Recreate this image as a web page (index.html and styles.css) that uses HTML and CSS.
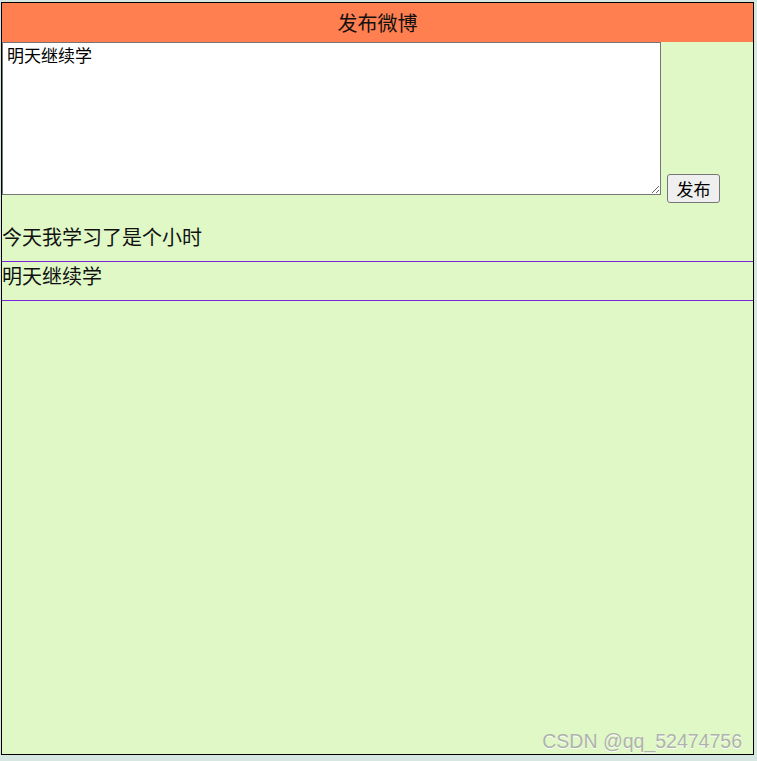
FILE: index.html
```html
<!DOCTYPE html>
<html lang="zh-CN">
<head>
    <meta charset="UTF-8">
    <title>发布微博</title>
    <link rel="stylesheet" href="styles.css">
</head>
<body>
    <div class="weibo">
        <div class="weibo-title">发布微博</div>

        <div class="weibo-form">
            <textarea class="weibo-input">明天继续学</textarea>
            <button class="weibo-btn">发布</button>
        </div>

        <ul class="weibo-list">
            <li>今天我学习了是个小时</li>
            <li>明天继续学</li>
        </ul>

        <div class="watermark">CSDN @qq_52474756</div>
    </div>
</body>
</html>
```

FILE: styles.css
```css
* {
    margin: 0;
    padding: 0;
    box-sizing: border-box;
}

body {
    background: #d5e7e0;
    font-family: "Noto Sans CJK SC", "Liberation Sans", sans-serif;
}

.weibo {
    position: relative;
    width: 753px;
    height: 753px;
    margin: 2px 0 0 1px;
    border: 1px solid #000;
    background: #dff8c6;
}

.weibo-title {
    height: 39px;
    line-height: 39px;
    background: #ff7f50;
    text-align: center;
    font-size: 20px;
    color: #111;
}

.weibo-form {
    display: flex;
    align-items: flex-start;
}

.weibo-input {
    width: 659px;
    height: 153px;
    padding: 1px 4px;
    border: 1px solid #767676;
    background: #fff;
    font-family: "Noto Sans CJK SC", sans-serif;
    font-size: 17px;
    line-height: 21px;
    color: #000;
}

.weibo-btn {
    width: 53px;
    height: 29px;
    margin: 132px 0 0 6px;
    border: 1px solid #767676;
    border-radius: 3px;
    background: #efefef;
    font-family: "Noto Sans CJK SC", sans-serif;
    font-size: 17px;
    color: #000;
}

.weibo-list {
    list-style: none;
    margin-top: 20px;
}

.weibo-list li {
    height: 39px;
    line-height: 28px;
    border-bottom: 1px solid #7b22dc;
    font-size: 20px;
    color: #111;
}

.watermark {
    position: absolute;
    right: 11px;
    bottom: 1px;
    font-family: "Liberation Sans", Arial, sans-serif;
    font-size: 19.5px;
    color: #aeb3ab;
    text-shadow: 0 1px 0 #fff;
}
```
